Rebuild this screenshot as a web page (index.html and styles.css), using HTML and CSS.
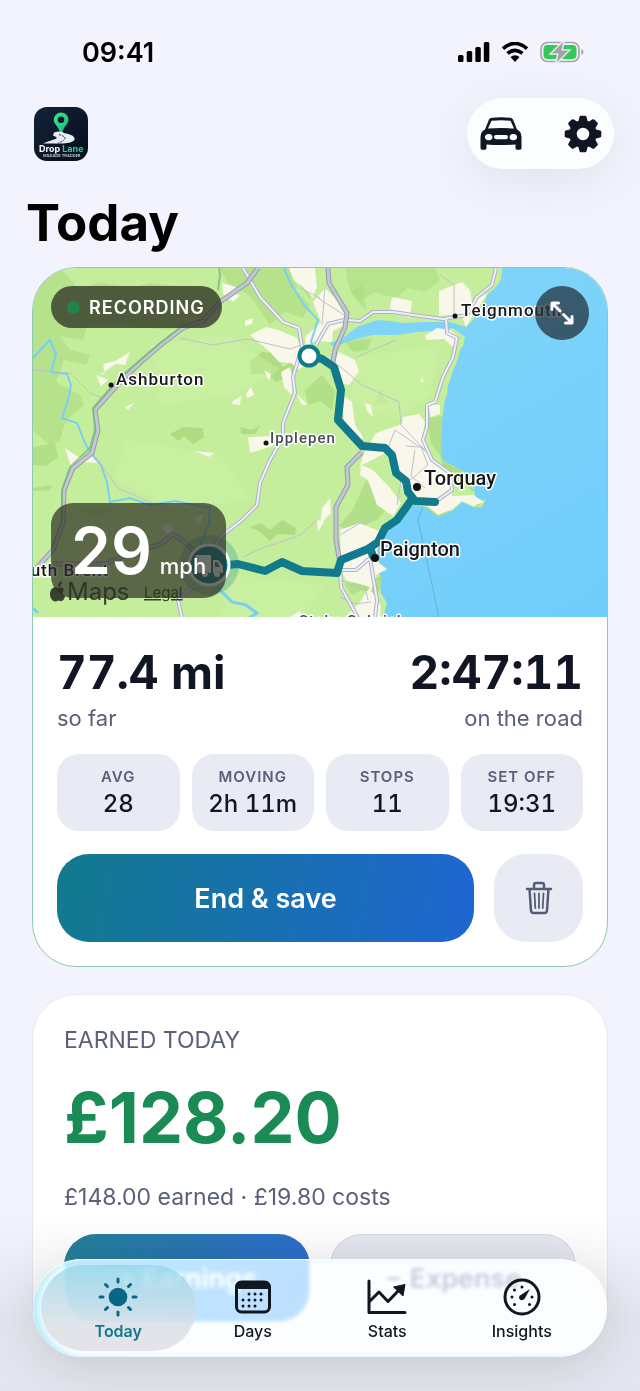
FILE: index.html
```html
<!DOCTYPE html>
<html lang="en">
<head>
    <meta charset="UTF-8">
    <meta name="viewport" content="width=device-width, initial-scale=1.0">
    <title>Drop Lane - Today</title>
    <link rel="stylesheet" href="styles.css">
</head>
<body>
    <div class="status-bar">
        <span class="clock">09:41</span>
        <div class="status-icons">
            <svg width="32" height="20" viewBox="0 0 32 20">
                <rect x="0" y="13" width="5.500" height="7" rx="1.500"/>
                <rect x="8.700" y="9" width="5.500" height="11" rx="1.500"/>
                <rect x="17.300" y="5" width="5.500" height="15" rx="1.500"/>
                <rect x="25.800" y="0" width="5.500" height="20" rx="1.500"/>
            </svg>
            <svg width="28" height="20" viewBox="0 0 28 20">
                <path d="M2 6.600Q14-3.600 26 6.600M6.500 11.400Q14 5.200 21.500 11.400" fill="none" stroke="#000" stroke-width="3.600"/>
                <path d="M9.500 15Q14 11.500 18.500 15L14 20Z"/>
            </svg>
            <svg width="44" height="22" viewBox="0 0 44 22">
                <rect x="1" y="1.500" width="38" height="19" rx="6.500" fill="none" stroke="#a3a3a8" stroke-width="1.600"/>
                <rect x="3.500" y="4" width="33" height="14" rx="4" fill="#34c759"/>
                <path d="M41.300 8Q43.500 9 43.500 11T41.300 14Z" fill="#a3a3a8"/>
                <path d="M23.500 .500L11.500 12.500H18.500L16.500 21.500L28.500 9.500H21.500Z" fill="#a3a3a8" stroke="#f2f3fc" stroke-width="2.500" paint-order="stroke"/>
            </svg>
        </div>
    </div>

    <header class="top-bar">
        <svg class="app-logo" viewBox="0 0 54 54" role="img" aria-label="Drop Lane">
            <defs>
                <linearGradient id="logo-bg" x1="0" y1="0" x2="1" y2="1">
                    <stop offset="0" stop-color="#142339"/>
                    <stop offset="1" stop-color="#060d1a"/>
                </linearGradient>
                <linearGradient id="pin" x1="0" y1="0" x2="1" y2="1">
                    <stop offset="0" stop-color="#42e28c"/>
                    <stop offset="1" stop-color="#10bd7c"/>
                </linearGradient>
            </defs>
            <rect width="54" height="54" rx="13" fill="url(#logo-bg)"/>
            <path d="M27 5.500A7.300 7.300 0 0 0 19.700 12.800C19.700 17 25 20 26.500 26.500H28C29 20 34.500 17 34.500 12.800A7.300 7.300 0 0 0 27 5.500ZM27 9.500A3.200 3.200 0 1 1 27 16A3.200 3.200 0 1 1 27 9.500Z" fill="url(#pin)"/>
            <path d="M20 25.500Q27 23.500 30 26Q42 28 40.500 33Q38 36 29 36.500H9Q15 34 20 32.500Q26 31 19 28.500Z" fill="#e8edf5"/>
            <path d="M25 27.500Q33 30 30.500 32.500T24 36" fill="none" stroke="#26364c" stroke-dasharray="2 1"/>
            <text x="5" y="45" class="logo-name">Drop <tspan fill="#27d18c">Lane</tspan></text>
            <text x="9" y="50" class="logo-sub">MILEAGE TRACKER</text>
        </svg>
        <div class="top-actions">
            <button type="button" aria-label="Vehicle">
                <svg width="42" height="34" viewBox="0 0 42 34">
                    <path fill-rule="evenodd" d="M9 2.500Q9.700 1 12 .700Q21-.300 30 .700Q32.300 1 33 2.500L37 12.500Q41.500 14.500 41.500 20V31Q41.500 32.800 40 32.800H37Q35.500 32.800 35.500 31V27.500Q21 28.500 6.500 27.500V31Q6.500 32.800 5 32.800H2Q.500 32.800 .500 31V20Q.500 14.500 5 12.500ZM11.500 3.800L8 11.500Q21 10.500 34 11.500L30.500 3.800Q21 2.800 11.500 3.800ZM8.700 17A3.200 3.200 0 1 0 8.700 23.300A3.200 3.200 0 1 0 8.700 17ZM33.300 17A3.200 3.200 0 1 0 33.300 23.300A3.200 3.200 0 1 0 33.300 17ZM16 18Q14 18 14 20.100T16 22.300H26Q28 22.300 28 20.100T26 18Z"/>
                </svg>
            </button>
            <button type="button" aria-label="Settings">
                <svg width="38" height="38" viewBox="-19 -19 38 38">
                    <defs><path id="cog-tooth" d="M-4.800-12L-3.500-17.200Q-3.200-18.300-2-18.300H2Q3.200-18.300 3.500-17.200L4.800-12Z"/></defs>
                    <circle r="10" fill="none" stroke="#111624" stroke-width="7.500"/>
                    <use href="#cog-tooth"/>
                    <use href="#cog-tooth" transform="rotate(45)"/>
                    <use href="#cog-tooth" transform="rotate(90)"/>
                    <use href="#cog-tooth" transform="rotate(135)"/>
                    <use href="#cog-tooth" transform="rotate(180)"/>
                    <use href="#cog-tooth" transform="rotate(225)"/>
                    <use href="#cog-tooth" transform="rotate(270)"/>
                    <use href="#cog-tooth" transform="rotate(315)"/>
                </svg>
            </button>
        </div>
    </header>

    <main>
        <h1>Today</h1>

        <section class="card trip-card">
            <div class="map">
                <svg class="map-drawing" viewBox="33 268 574 349" preserveAspectRatio="xMidYMid slice">
                    <defs>
                        <linearGradient id="sea" x1="0" y1="0" x2="1" y2="1">
                            <stop offset="0" stop-color="#88d8f8"/>
                            <stop offset="1" stop-color="#70cdfb"/>
                        </linearGradient>
                    </defs>
                    <rect x="33" y="268" width="574" height="350" fill="url(#sea)"/>
                    <!-- land -->
                    <path fill="#c4ee9b" d="M33 268H502L501 280L495 288L487 295L484 304L477 310L473 320L466 327L456 324L450 322L427 322L403 323L390 321L377 320L357 327L343 338L330 343L333 347L353 340L373 335L397 335L417 332L443 330L453 328L465 337L463 346L460 350L457 362L453 370L450 380L448 385L447 395L445 400L443 412L442 423L440 447L442 460L457 468L470 475L474 490L476 500L486 499L482 507L473 507L462 502L453 510L438 517L432 510L425 507L413 505L400 518L390 528L382 540L377 550L378 563L387 570L380 573L381 593L387 603L383 618H33Z"/>
                    <!-- woodland and moor -->
                    <g fill="#aedc83">
                        <path d="M33 268H60L80 290L100 282L130 288L150 283L215 290L222 300L205 322L170 330L120 325L88 322L83 340L60 336L70 350L90 355L86 365L64 360L56 382L80 395L84 405L66 420L60 440L50 446L33 430Z" opacity=".65"/>
                        <path d="M219 268H300L296 290L310 305L303 318L285 312L270 325L250 296L228 283Z" opacity=".65"/>
                        <path d="M345 268H435L440 280L425 292L408 288L395 298L374 292L360 302L350 290Z" opacity=".6"/>
                        <path d="M250 361L262 352L276 353L283 367L296 360L292 376L276 382L268 374L251 374Z"/>
                        <path d="M170 434L183 427L203 428L204 437L193 444L184 436L178 441ZM240 427L252 430L261 425L255 434L241 434ZM249 527L261 523L270 530L282 520L296 528L295 535L278 534L270 541L260 532Z"/>
                        <path d="M322 375L335 391L332 410L320 401L308 405L305 390ZM345 342L372 338L367 350L353 352ZM427 418L442 416V457L431 444Z" opacity=".8"/>
                        <path d="M366 480L392 503L377 520L351 531L339 526L353 509ZM344 584L369 581L383 575L379 593L361 590L352 595ZM33 447L55 443L58 457L46 466L33 465ZM82 510L97 507L113 510L92 518ZM33 488L52 485L50 490L33 491Z" opacity=".8"/>
                        <path d="M300 285L318 282L310 300ZM367 312L350 292L362 284ZM381 390L387 402L374 405Z" opacity=".6"/>
                        <path d="M439 447L443 461L468 474L474 492L462 483L445 478ZM486 499L477 507L473 501ZM425 507L438 517L450 512L447 507Z"/>
                    </g>
                    <g fill="#d3f2a7" opacity=".4">
                        <path d="M150 345L230 335L280 370L235 395L160 405ZM125 440L220 455L250 500L180 510L115 480ZM355 357L440 345L430 395L395 420L350 400ZM230 575L325 585L300 618H220Z"/>
                    </g>
                    <!-- built-up areas -->
                    <g fill="#f8f7e9">
                        <path d="M222 283L236 287L234 294L240 295L233 302L223 294ZM250 335L266 327L278 330L297 338L302 352L311 363L299 369L291 363L279 362L270 352ZM289 268H315L317 287L313 298L302 286L294 281ZM313 302L325 288L338 301L345 313L343 326L333 331L332 342L315 341L306 347L305 337L321 322ZM392 297L412 301L410 318L390 309ZM439 291L462 282L470 290L472 302L488 293L473 315L466 327L461 314L439 316Z"/>
                        <path d="M335 360L339 352L355 360L359 371L349 385L341 383ZM281 372L290 367L293 380L292 395L284 387ZM233 401L241 396L240 405L232 404ZM246 394L251 387L254 395L247 398ZM245 321L253 318L252 324L245 326ZM296 393L308 405L302 405ZM125 407L134 403L128 410ZM195 451L214 453L209 457ZM264 370L271 374L269 381ZM98 376L105 373L103 364L115 361L130 352L125 365L116 364ZM96 375L108 380L101 386Z"/>
                        <path d="M341 394L352 402L355 425L363 437L360 445L345 428ZM365 403L371 405L373 417L367 411ZM412 364L419 372ZM422 377L424 382L420 382ZM425 336L437 328L450 330L459 337L454 348L444 339L427 340ZM440 405L428 404L431 417L440 414ZM376 433L402 424L403 417L419 414L425 422L422 438L429 454L442 470L451 472L452 496L473 495L484 502L473 506L462 501L453 509L438 515L426 505L412 504L403 492L398 467L389 451L360 466L364 453Z"/>
                        <path d="M361 465L373 470L390 488L401 503L393 516L377 505L368 480L360 475ZM330 498L331 513L320 525L322 508ZM340 530L359 523L382 532L377 550L379 563L387 569L377 574L371 591L381 606L380 618H344L360 602L370 587L346 580L341 570ZM65 448L80 458L94 454L98 463L82 462L72 470ZM291 616L300 611L302 618H288ZM248 437L274 436L273 446L250 453ZM317 520L324 522L318 532ZM162 525L171 524L174 535L165 533ZM194 518L204 514L199 525Z"/>
                    </g>
                    <!-- water -->
                    <g fill="none" stroke="#79cff3" stroke-width="2">
                        <path d="M33 358L42 348L50 340L56 354L51 372L67 374L71 385L68 400L62 418L77 423L85 443L92 455L101 465L107 482L110 502L130 498L150 505L175 501L210 508L209 523L200 545M284 268L291 284L304 305L318 320L311 342L320 359"/>
                        <path d="M217 587L232 602L246 605L257 613L249 618M33 608L38 613" stroke-width="3"/>
                    </g>
                    <!-- minor roads -->
                    <g fill="none" stroke="#c0bfce" stroke-width="1">
                        <path d="M180 338L212 345L248 339L290 349L304 344M33 370L70 373L90 393L103 398M92 452L118 488L150 502L180 514M243 557L260 549L300 535L317 520M338 365L362 385L399 402L401 425L425 450M355 358L372 350L396 340M340 535L360 523L369 520M388 448L395 430L430 454M401 480L397 505M318 298L344 315M325 287L322 325M454 314V285L440 275M340 580L366 590L368 600"/>
                        <path d="M406 446L421 447L428 465L408 482M415 450L411 476L425 488M320 298L300 288M340 597L355 604L371 602"/>
                    </g>
                    <!-- main roads -->
                    <g class="road-edge">
                        <path id="r1" d="M243 268L260 297L283 322L299 328L302 347L293 377L295 393L283 423V437L270 460L260 483L257 505L242 520L220 537L210 555M316 345L328 324L344 320"/>
                        <path id="r2" d="M347 320L360 321L373 312L393 312L413 315L443 319L467 315L477 297L492 285L496 268M446 319L447 333L457 338L453 357L443 377L435 402L427 405V427L423 440L432 460L450 473L452 490L438 500"/>
                        <path id="r3" d="M340 563L341 587L358 618M342 570L356 570L370 558L377 600L375 618M182 618L178 600L195 585"/>
                    </g>
                    <g class="road-fill"><use href="#r1"/><use href="#r2"/><use href="#r3"/></g>
                    <g class="trunk-edge">
                        <path id="t1" d="M258 268L247 283L220 302L203 321L183 328L163 343L143 360L120 382L95 410L98 430L92 453L73 468L64 490L63 523L53 550L33 572"/>
                        <path id="t2" d="M328 268L329 283L347 313L345 327L335 350L333 362"/>
                        <path id="t3" d="M362 452L347 467L348 485L336 507V540L340 563M53 564H105L135 552L161 544L173 534L187 544L200 556"/>
                    </g>
                    <g class="trunk-fill"><use href="#t1"/><use href="#t2"/><use href="#t3"/></g>
                    <path d="M219 268L220 275L218 290M181 327L158 345L118 379L93 408L95 430L90 448L70 467L62 490V520L52 548" fill="none" stroke="#71b778" stroke-width="2" opacity=".7"/>
                    <path d="M423 507L418 520L430 575L439 618" fill="none" stroke="#5cb5dc"/>
                    <!-- recorded route -->
                    <path class="route" d="M310 356L322 359L334 367L341 390L338 420L362 446L385 448L392 455L396 473L406 481L408 492L415 501L435 502M412 499L397 520L385 528L378 542L368 549L341 560L337 573L302 571L282 562L265 571L238 564L228 565"/>
                    <path class="route" d="M370 548L373 556"/>
                    <circle cx="309" cy="356" r="9.500" fill="#fff" stroke="#127a8d" stroke-width="4"/>
                    <circle cx="209" cy="565" r="30" fill="#127a8d" opacity=".25"/>
                    <circle cx="209" cy="565" r="20" fill="#087b90" stroke="#fff" stroke-width="3"/>
                    <path fill="#fff" fill-rule="evenodd" d="M197 555H211V573H209A4 4 0 0 0 202 573H195V557Q195 555 197 555ZM213 560H218L223 566V573H221A4 4 0 0 0 214 573H213ZM215 562V567H220L217 562ZM205 571A3 3 0 1 0 205 577A3 3 0 1 0 205 571ZM217 571A3 3 0 1 0 217 577A3 3 0 1 0 217 571Z"/>
                    <!-- places -->
                    <g fill="#111">
                        <circle cx="111" cy="385" r="2.500"/>
                        <circle cx="266" cy="443" r="2.500"/>
                        <circle cx="455" cy="316" r="2.500"/>
                        <circle cx="417" cy="487" r="4"/>
                        <circle cx="375" cy="558" r="4"/>
                    </g>
                    <g class="place">
                        <text x="116" y="385">Ashburton</text>
                        <text x="461" y="316">Teignmouth</text>
                        <text x="20" y="576">outh Brent</text>
                    </g>
                    <g class="place village">
                        <text x="270" y="443">Ipplepen</text>
                        <text x="299" y="626">Stoke Gabriel</text>
                    </g>
                    <g class="place town">
                        <text x="424" y="485">Torquay</text>
                        <text x="380" y="556">Paignton</text>
                    </g>
                    <path fill="#38422f" d="M58 588C54 586 50 589 50 594C50 599 54 603 57 601Q58 600 60 601C63 602 65 598 65 596Q61 594 64 589Q61 586 58 588ZM58 587Q58 582 62 581Q62 586 58 587Z"/>
                    <text x="67" y="600" class="map-brand">Maps</text>
                    <text x="144" y="598" class="map-legal">Legal</text>
                </svg>
                <div class="recording"><span class="dot"></span>RECORDING</div>
                <button type="button" class="expand" aria-label="Expand map">
                    <svg width="24" height="24" viewBox="0 0 24 24">
                        <path d="M10 10L2.500 2.500M2 8.500V2H8.500M13.500 13.500L21.500 21.500M22 15.500V22H15.500" fill="none" stroke="#fff" stroke-width="3" stroke-linecap="round" stroke-linejoin="round"/>
                    </svg>
                </button>
                <div class="speed"><strong>29</strong><span>mph</span></div>
            </div>

            <div class="trip-body">
                <div class="totals">
                    <div><strong>77.4 mi</strong><span>so far</span></div>
                    <div class="right"><strong>2:47:11</strong><span>on the road</span></div>
                </div>
                <dl class="tiles">
                    <div><dt>AVG</dt><dd>28</dd></div>
                    <div><dt>MOVING</dt><dd>2h 11m</dd></div>
                    <div><dt>STOPS</dt><dd>11</dd></div>
                    <div><dt>SET OFF</dt><dd>19:31</dd></div>
                </dl>
                <div class="trip-actions">
                    <button type="button" class="save">End &amp; save</button>
                    <button type="button" class="discard" aria-label="Discard trip">
                        <svg width="28" height="34" viewBox="0 0 28 34">
                            <g fill="none" stroke="#555d76" stroke-linecap="round" stroke-linejoin="round">
                                <path d="M2 8H26M9 8V4Q9 2 11 2H17Q19 2 19 4V8M4.500 8L6 29.500Q6.200 32 8.500 32H19.500Q21.800 32 22 29.500L23.500 8" stroke-width="2.500"/>
                                <path d="M9.500 12.500L10.300 27M14 12.500V27M18.500 12.500L17.700 27" stroke-width="1.800"/>
                            </g>
                        </svg>
                    </button>
                </div>
            </div>
        </section>

        <section class="card earned-card">
            <h2>EARNED TODAY</h2>
            <p class="amount">£128.20</p>
            <p class="breakdown">£148.00 earned · £19.80 costs</p>
            <div class="money-actions">
                <button type="button" class="add-earnings">+ Earnings</button>
                <button type="button" class="add-expense">− Expense</button>
            </div>
        </section>
    </main>

    <div class="tab-dock">
        <nav class="tab-bar">
            <a href="#today" class="active">
                <svg width="40" height="40" viewBox="-20 -20 40 40">
                    <circle r="9.300" fill="#076787"/>
                    <path d="M0-18V-15M0 15V18M-18 0H-15M15 0H18M-12.500-12.500L-10.500-10.500M10.500 10.500L12.500 12.500M-12.500 12.500L-10.500 10.500M10.500-10.500L12.500-12.500" stroke="#076787" stroke-width="3" stroke-linecap="round"/>
                </svg>
                <span>Today</span>
            </a>
            <a href="#days">
                <svg width="40" height="40" viewBox="0 0 40 40">
                    <rect x="3.500" y="5" width="33" height="30" rx="5" fill="none" stroke="#111620" stroke-width="3"/>
                    <path d="M3 12V9Q3 4 8 4H32Q37 4 37 9V12Z" fill="#111620"/>
                    <path d="M16 17H16.010M22 17H22.010M28 17H28.010M10 23H10.010M16 23H16.010M22 23H22.010M28 23H28.010M10 29H10.010M16 29H16.010M22 29H22.010" stroke="#111620" stroke-width="3" stroke-linecap="round"/>
                </svg>
                <span>Days</span>
            </a>
            <a href="#stats">
                <svg width="40" height="40" viewBox="0 0 40 40">
                    <path d="M2 4V35.500H38M3 24L12 15L21 24.500L34 11" fill="none" stroke="#111620" stroke-width="3" stroke-linecap="round" stroke-linejoin="round"/>
                    <path d="M26.500 10L38 7.500L36 19Z" fill="#111620" stroke="#111620" stroke-linejoin="round"/>
                </svg>
                <span>Stats</span>
            </a>
            <a href="#insights">
                <svg width="40" height="40" viewBox="0 0 40 40">
                    <circle cx="20" cy="20" r="17" fill="none" stroke="#111620" stroke-width="3"/>
                    <path d="M20 10H20.010M12.500 13H12.510M10 20H10.010M12.500 27.500H12.510M27.500 27.500H27.510M30 20H30.010" stroke="#111620" stroke-width="3" stroke-linecap="round"/>
                    <path d="M28 12L22.500 22Q20 24 18 22.500Q16 20.500 18 18.500Z" fill="#111620"/>
                </svg>
                <span>Insights</span>
            </a>
        </nav>
    </div>
</body>
</html>
```
FILE: styles.css
```css
* {
    box-sizing: border-box;
}

body {
    margin: 0;
    min-height: 100vh;
    font-family: Inter, "Liberation Sans", sans-serif;
    background-color: #f2f3fc;
    color: #111624;
    overflow-x: hidden;
}

button {
    font-family: inherit;
    border: none;
    padding: 0;
    cursor: pointer;
}

svg {
    display: block;
    flex-shrink: 0;
}

h1, h2, p, dl, dd {
    margin: 0;
}

/* Status bar and header */

.status-bar {
    display: flex;
    justify-content: space-between;
    align-items: center;
    height: 98px;
    padding: 6px 56px 0 82px;
}

.clock {
    font-size: 27px;
    font-weight: 600;
    color: #000;
}

.status-icons {
    display: flex;
    align-items: center;
    gap: 11px;
}

.top-bar {
    display: flex;
    justify-content: space-between;
    align-items: center;
    padding: 0 26px 0 34px;
}

.app-logo {
    width: 54px;
    height: 54px;
}

.logo-name {
    font-size: 9px;
    font-weight: 700;
    fill: #fff;
}

.logo-sub {
    font-size: 4px;
    font-weight: 600;
    fill: #c8d0dc;
}

.top-actions {
    display: flex;
    justify-content: space-between;
    width: 147px;
    height: 71px;
    padding: 0 12px 0 13px;
    border-radius: 36px;
    background-color: #fbfdff;
    box-shadow: 0 12px 50px rgba(0, 0, 0, 0.07);
}

.top-actions button {
    background: none;
}

.top-actions svg {
    fill: #111624;
}

h1 {
    padding: 20px 26px 10px;
    font-size: 51px;
    font-weight: 700;
    line-height: 68px;
    color: #000;
}

/* Cards */

.card {
    margin: 0 32px 27px;
    background-color: #fff;
    border: 1px solid #e8e9f1;
    border-radius: 44px;
}

.trip-card {
    overflow: hidden;
    border-color: #8dcaae;
}

.map {
    position: relative;
}

.map-drawing {
    width: 100%;
    height: auto;
}

.road-edge, .road-fill, .trunk-edge, .trunk-fill {
    fill: none;
    stroke-linejoin: round;
}

.road-edge {
    stroke: #b0b0c8;
    stroke-width: 4;
}

.road-fill {
    stroke: #eef0f8;
    stroke-width: 2;
}

.trunk-edge {
    stroke: #959aad;
    stroke-width: 5;
}

.trunk-fill {
    stroke: #c1c8d2;
    stroke-width: 3;
}

.route {
    fill: none;
    stroke: #127a8d;
    stroke-width: 8;
    stroke-linecap: round;
    stroke-linejoin: round;
}

.place {
    font-family: Roboto, sans-serif;
    font-size: 17px;
    font-weight: 500;
    letter-spacing: 1px;
    fill: #16181a;
    stroke: #fff;
    stroke-width: 3px;
    stroke-linejoin: round;
    paint-order: stroke;
}

.village {
    font-size: 15px;
    fill: #4b4b55;
}

.town {
    font-size: 20px;
    letter-spacing: 0;
}

.map-brand {
    font-size: 24px;
    fill: #38422f;
}

.map-legal {
    font-size: 15px;
    fill: #38422f;
    text-decoration: underline;
}

.recording, .expand, .speed {
    position: absolute;
    color: #fff;
    background-color: rgba(45, 47, 36, 0.76);
}

.recording {
    top: 18px;
    left: 18px;
    display: flex;
    align-items: center;
    gap: 9px;
    height: 42px;
    padding: 0 17px 0 16px;
    border-radius: 21px;
    font-size: 18px;
    font-weight: 600;
    letter-spacing: 1px;
}

.dot {
    width: 13px;
    height: 13px;
    border-radius: 50%;
    background-color: #22844a;
}

.expand {
    top: 18px;
    right: 18px;
    display: grid;
    place-items: center;
    width: 54px;
    height: 54px;
    border-radius: 50%;
    background-color: rgba(35, 52, 63, 0.76);
}

.speed {
    left: 18px;
    bottom: 19px;
    display: flex;
    align-items: baseline;
    gap: 8px;
    height: 95px;
    padding: 0 20px;
    border-radius: 22px;
    background-color: rgba(45, 47, 36, 0.7);
    line-height: 95px;
}

.speed strong {
    font-size: 64px;
    font-weight: 600;
}

.speed span {
    font-size: 22px;
    font-weight: 500;
}

.trip-body {
    padding: 25px 24px 24px;
}

.totals {
    display: flex;
    justify-content: space-between;
}

.totals strong, .totals span {
    display: block;
}

.totals strong {
    font-size: 46px;
    font-weight: 700;
    line-height: 60px;
    font-variant-numeric: tabular-nums;
}

.totals span {
    font-size: 22px;
    line-height: 32px;
    color: #5a6079;
}

.right {
    text-align: right;
}

.tiles {
    display: grid;
    grid-template-columns: repeat(4, 1fr);
    gap: 12px;
    margin: 20px 0 23px;
}

.tiles div {
    padding: 11px 0 12px;
    border-radius: 22px;
    text-align: center;
    background-color: #e8ebf4;
}

.tiles dt {
    font-size: 15px;
    font-weight: 600;
    line-height: 24px;
    letter-spacing: 1px;
    color: #5a6079;
}

.tiles dd {
    font-size: 24px;
    font-weight: 500;
    line-height: 30px;
    font-variant-numeric: tabular-nums;
}

.trip-actions {
    display: flex;
    gap: 20px;
}

.save, .discard, .money-actions button {
    height: 88px;
    border-radius: 32px;
}

.save {
    flex: 1;
    font-size: 27px;
    font-weight: 600;
    color: #fff;
    background: linear-gradient(100deg, #127a8d, #1f66d2);
}

.discard {
    display: grid;
    place-items: center;
    width: 89px;
    background-color: #e8ebf4;
}

.earned-card {
    padding: 28px 31px 24px;
}

h2 {
    font-size: 23px;
    font-weight: 400;
    line-height: 34px;
    color: #5a6079;
}

.amount {
    padding: 19px 0 21px;
    font-size: 70px;
    font-weight: 700;
    line-height: 84px;
    color: #1b8b55;
}

.breakdown {
    font-size: 23px;
    line-height: 32px;
    color: #5a6079;
}

.money-actions {
    display: flex;
    gap: 20px;
    margin-top: 21px;
}

.money-actions button {
    flex: 1;
    font-size: 27px;
    font-weight: 600;
}

.add-earnings {
    color: #fff;
    background: linear-gradient(100deg, #238098, #2e6dd2);
}

.add-expense {
    color: #111624;
    background-color: #e6e8f2;
    box-shadow: inset 0 0 0 1px #dadbe3;
}

/* Tab bar */

.tab-dock {
    position: fixed;
    left: 0;
    right: 0;
    bottom: 0;
    padding: 50px 33px 34px;
    background: linear-gradient(rgba(60, 60, 60, 0), rgba(60, 60, 60, 0.07) 60%);
    pointer-events: none;
}

.tab-bar {
    display: grid;
    grid-template-columns: repeat(4, 1fr);
    height: 98px;
    padding: 6px 18px;
    border-radius: 49px;
    background-color: rgba(250, 252, 255, 0.76);
    backdrop-filter: blur(2px) saturate(1.8) brightness(1.2);
    box-shadow: inset 0 1px 1px #fff, inset 8px 0 7px -2px #b9ecfb, 0 10px 50px rgba(0, 0, 0, 0.13);
    pointer-events: auto;
}

.tab-bar a {
    display: flex;
    flex-direction: column;
    align-items: center;
    padding-top: 12px;
    border-radius: 43px;
    font-size: 16px;
    font-weight: 500;
    line-height: 28px;
    color: #111620;
    text-decoration: none;
}

.tab-bar .active {
    margin: 0 -10px;
    font-weight: 600;
    color: #127a8d;
    background: linear-gradient(rgba(145, 212, 232, 0.7), rgba(222, 224, 230, 0.85) 75%);
}
```
